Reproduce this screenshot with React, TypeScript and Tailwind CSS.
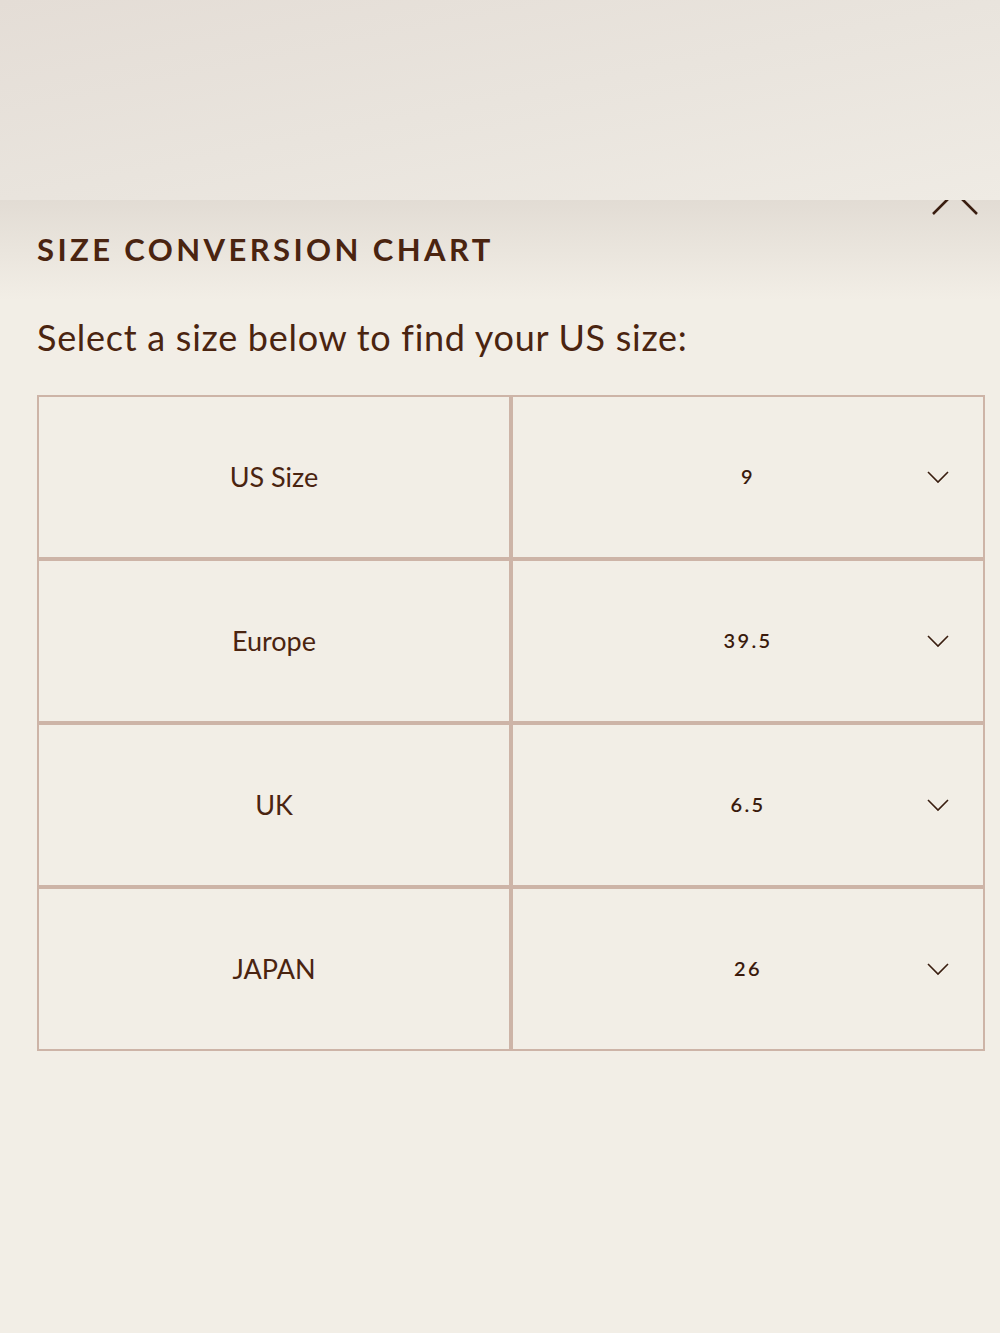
import React from "react";

const rows = [
  { label: "US Size", value: "9" },
  { label: "Europe", value: "39.5" },
  { label: "UK", value: "6.5" },
  { label: "JAPAN", value: "26" },
];

function Chevron() {
  return (
    <svg width="22" height="13" viewBox="0 0 22 13" fill="none">
      <path d="M1 1.5 L11 11.5 L21 1.5" stroke="#3a1e10" strokeWidth="1.6" />
    </svg>
  );
}

export default function App() {
  return (
    <div
      className="relative min-h-[1333px] w-[1000px] overflow-hidden bg-[#f2eee6] text-[#4a2410]"
      style={{ fontFamily: "Lato, 'Open Sans', sans-serif" }}
    >
      <div className="relative z-10 h-[200px] bg-gradient-to-br from-[#e4ddd6] via-[#e9e4dd] to-[#efebe4]" />
      <div className="relative">
        <div className="pointer-events-none absolute inset-x-0 top-0 h-[100px] bg-gradient-to-b from-[#e2dcd4] to-[#f2eee6]" />
        <div className="absolute right-[21px] top-[-22px]">
          <svg width="48" height="38" viewBox="0 0 48 38" fill="none">
            <path d="M2 36 L36 2 M12 2 L46 36" stroke="#3a1e10" strokeWidth="2.5" />
          </svg>
        </div>
        <div className="relative px-[37px] pt-[34px]">
          <h1 className="text-[31px] font-bold leading-none tracking-[0.11em] text-[#4a2410]">
            SIZE CONVERSION CHART
          </h1>
          <p className="mt-[54px] text-[36px] leading-none tracking-[0.02em] text-[#4a2410]">
            Select a size below to find your US size:
          </p>
          <div className="mt-[40px] w-[948px]">
            {rows.map((r, i) => (
              <div key={i} className="grid h-[164px] grid-cols-2">
                <div className="flex items-center justify-center border-2 border-[#cdb4a7]">
                  <span className="text-[27px] text-[#4a2410]">{r.label}</span>
                </div>
                <div className="relative flex items-center justify-center border-2 border-[#cdb4a7]">
                  <span className="pb-[2px] text-[20px] font-semibold tracking-[0.12em] text-[#3a1a0c]">
                    {r.value}
                  </span>
                  <div className="absolute right-[34px] top-1/2 -translate-y-1/2">
                    <Chevron />
                  </div>
                </div>
              </div>
            ))}
          </div>
        </div>
      </div>
    </div>
  );
}
